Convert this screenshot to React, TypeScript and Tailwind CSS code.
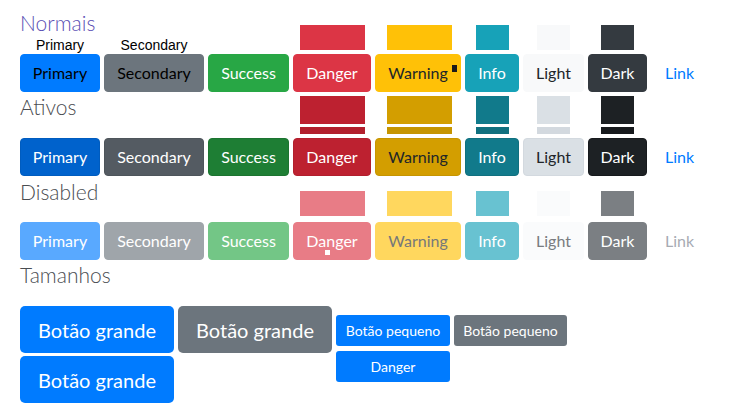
import React from "react"

type Col = {
  text: string
  w: string
  cls: string
  top?: React.ReactNode
  mark?: React.ReactNode
}

function Rect({ w, bg }: { w: string; bg: string }) {
  return <div className={`h-[25px] ${w} ${bg}`}></div>
}

function Label({ text }: { text: string }) {
  return (
    <span className="mb-px font-['Liberation_Sans',Arial,sans-serif] text-sm leading-4 text-black">
      {text}
    </span>
  )
}

function Btn({ text, w, cls, mark }: Col) {
  return (
    <button
      className={`relative flex h-[38px] ${w} items-center justify-center rounded border text-base leading-6 ${cls}`}
    >
      {text}
      {mark}
    </button>
  )
}

function Row({ cols, className }: { cols: Col[]; className?: string }) {
  return (
    <div className={`flex items-end gap-1 ${className ?? ""}`}>
      {cols.map((c, i) => (
        <div key={i} className="flex flex-col items-center">
          {c.top}
          <Btn {...c} />
        </div>
      ))}
    </div>
  )
}

function Heading({ children, className }: { children: React.ReactNode; className?: string }) {
  return <h2 className={`h-[28px] text-[21px] font-light leading-[28px] ${className ?? ""}`}>{children}</h2>
}

const normais: Col[] = [
  { text: "Primary", w: "w-[80px]", cls: "bg-[#007bff] border-[#007bff] text-black", top: <Label text="Primary" /> },
  { text: "Secondary", w: "w-[100px]", cls: "bg-[#6c757d] border-[#6c757d] text-black", top: <Label text="Secondary" /> },
  { text: "Success", w: "w-[81px]", cls: "bg-[#28a745] border-[#28a745] text-white" },
  {
    text: "Danger",
    w: "w-[78px]",
    cls: "bg-[#dc3545] border-[#dc3545] text-white",
    top: <div className="mb-1"><Rect w="w-[65px]" bg="bg-[#dc3545]" /></div>,
  },
  {
    text: "Warning",
    w: "w-[86px]",
    cls: "bg-[#ffc107] border-[#ffc107] text-[#212529]",
    top: <div className="mb-1 ml-[3px]"><Rect w="w-[65px]" bg="bg-[#ffc107]" /></div>,
    mark: <span className="absolute right-[3px] top-[10px] h-[7px] w-[5px] bg-[#1a1a1a]"></span>,
  },
  {
    text: "Info",
    w: "w-[54px]",
    cls: "bg-[#17a2b8] border-[#17a2b8] text-white",
    top: <div className="mb-1"><Rect w="w-[33px]" bg="bg-[#17a2b8]" /></div>,
  },
  {
    text: "Light",
    w: "w-[61px]",
    cls: "bg-[#f8f9fa] border-[#f8f9fa] text-[#212529]",
    top: <div className="mb-1"><Rect w="w-[33px]" bg="bg-[#f8f9fa]" /></div>,
  },
  {
    text: "Dark",
    w: "w-[59px]",
    cls: "bg-[#343a40] border-[#343a40] text-white",
    top: <div className="mb-1"><Rect w="w-[33px]" bg="bg-[#343a40]" /></div>,
  },
  { text: "Link", w: "w-[57px]", cls: "border-transparent text-[#007bff]" },
]

function Stack({ w, a, b }: { w: string; a: string; b: string }) {
  return (
    <div className="mb-1 flex flex-col gap-[3px]">
      <div className={`h-[28px] ${w} ${a}`}></div>
      <div className={`h-[7px] ${w} ${b}`}></div>
    </div>
  )
}

const ativos: Col[] = [
  { text: "Primary", w: "w-[80px]", cls: "bg-[#0062cc] border-[#005cbf] text-white" },
  { text: "Secondary", w: "w-[100px]", cls: "bg-[#545b62] border-[#4e555b] text-white" },
  { text: "Success", w: "w-[81px]", cls: "bg-[#1e7e34] border-[#1c7430] text-white" },
  {
    text: "Danger",
    w: "w-[78px]",
    cls: "bg-[#bd2130] border-[#b21f2d] text-white",
    top: <Stack w="w-[65px]" a="bg-[#bd2130]" b="bg-[#b21f2d]" />,
  },
  {
    text: "Warning",
    w: "w-[86px]",
    cls: "bg-[#d39e00] border-[#c69500] text-[#212529]",
    top: <div className="ml-[3px]"><Stack w="w-[65px]" a="bg-[#d39e00]" b="bg-[#c69500]" /></div>,
  },
  {
    text: "Info",
    w: "w-[54px]",
    cls: "bg-[#117a8b] border-[#10707f] text-white",
    top: <Stack w="w-[33px]" a="bg-[#117a8b]" b="bg-[#10707f]" />,
  },
  {
    text: "Light",
    w: "w-[61px]",
    cls: "bg-[#dae0e5] border-[#d3d9df] text-[#212529]",
    top: <Stack w="w-[33px]" a="bg-[#dae0e5]" b="bg-[#d3d9df]" />,
  },
  {
    text: "Dark",
    w: "w-[59px]",
    cls: "bg-[#1d2124] border-[#171a1d] text-white",
    top: <Stack w="w-[33px]" a="bg-[#1d2124]" b="bg-[#171a1d]" />,
  },
  { text: "Link", w: "w-[57px]", cls: "border-transparent text-[#007bff]" },
]

const disabled: Col[] = [
  { text: "Primary", w: "w-[80px]", cls: "bg-[#59a9ff] border-[#59a9ff] text-white" },
  { text: "Secondary", w: "w-[100px]", cls: "bg-[#9fa5aa] border-[#9fa5aa] text-white" },
  { text: "Success", w: "w-[81px]", cls: "bg-[#73c686] border-[#73c686] text-white" },
  {
    text: "Danger",
    w: "w-[78px]",
    cls: "bg-[#e87c86] border-[#e87c86] text-white",
    top: <div className="mb-[6px]"><Rect w="w-[65px]" bg="bg-[#e87c86]" /></div>,
    mark: <span className="absolute left-[31px] top-[27px] h-[5px] w-[5px] bg-white"></span>,
  },
  {
    text: "Warning",
    w: "w-[86px]",
    cls: "bg-[#ffd75e] border-[#ffd75e] text-[#76787a]",
    top: <div className="mb-[6px] ml-[3px]"><Rect w="w-[65px]" bg="bg-[#ffd75e]" /></div>,
  },
  {
    text: "Info",
    w: "w-[54px]",
    cls: "bg-[#68c2d1] border-[#68c2d1] text-white",
    top: <div className="mb-[6px]"><Rect w="w-[33px]" bg="bg-[#68c2d1]" /></div>,
  },
  {
    text: "Light",
    w: "w-[61px]",
    cls: "bg-[#fafbfc] border-[#fafbfc] text-[#797c80]",
    top: <div className="mb-[6px]"><Rect w="w-[33px]" bg="bg-[#fafbfc]" /></div>,
  },
  {
    text: "Dark",
    w: "w-[59px]",
    cls: "bg-[#7b7f83] border-[#7b7f83] text-white",
    top: <div className="mb-[6px]"><Rect w="w-[33px]" bg="bg-[#7b7f83]" /></div>,
  },
  { text: "Link", w: "w-[57px]", cls: "border-transparent text-[#a7abb3]" },
]

export default function App() {
  return (
    <div className="min-h-[420px] bg-white px-5 pt-[9px] font-[Lato,sans-serif] text-[#212529]">
      <Heading className="text-[#5b50b4]">Normais</Heading>
      <Row cols={normais} className="-mt-[12px]" />

      <Heading className="mt-px text-[#4a4d52]">Ativos</Heading>
      <Row cols={ativos} className="-mt-[25px]" />

      <Heading className="mt-[2px] text-[#4a4d52]">Disabled</Heading>
      <Row cols={disabled} className="-mt-[15px]" />

      <Heading className="mt-px text-[#4a4d52]">Tamanhos</Heading>
      <div className="mt-[17px] flex items-start gap-1">
        <div className="flex flex-col gap-[3px]">
          <button className="h-[47px] w-[154px] rounded-[5px] bg-[#007bff] text-xl leading-[30px] text-white">
            Botão grande
          </button>
          <button className="h-[47px] w-[154px] rounded-[5px] bg-[#007bff] text-xl leading-[30px] text-white">
            Botão grande
          </button>
        </div>
        <button className="h-[47px] w-[154px] rounded-[5px] bg-[#6c757d] text-xl leading-[30px] text-white">
          Botão grande
        </button>
        <div className="mt-[9px] flex flex-col gap-[5px]">
          <div className="flex gap-1">
            <button className="h-[31px] w-[114px] rounded-[3px] bg-[#007bff] text-sm leading-[21px] text-white">
              Botão pequeno
            </button>
            <button className="h-[31px] w-[113px] rounded-[3px] bg-[#6c757d] text-sm leading-[21px] text-white">
              Botão pequeno
            </button>
          </div>
          <button className="h-[31px] w-[114px] rounded-[3px] bg-[#007bff] text-sm leading-[21px] text-white">
            Danger
          </button>
        </div>
      </div>
    </div>
  )
}
